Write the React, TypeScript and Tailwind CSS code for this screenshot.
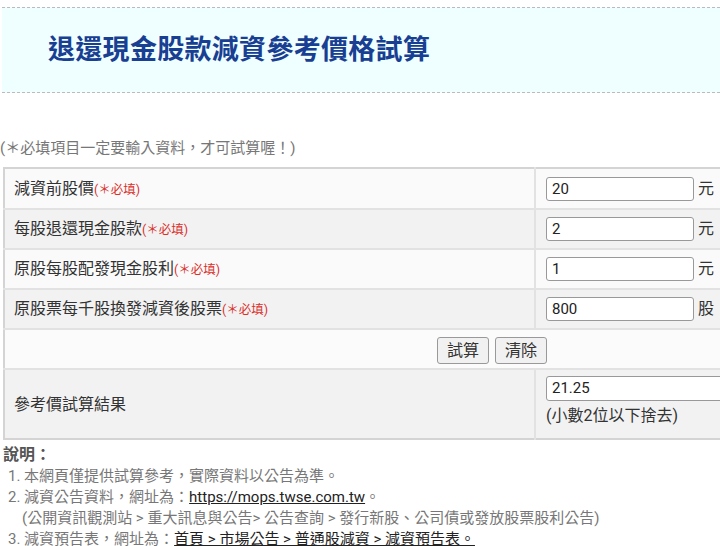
import React from 'react';

const rows = [
  { label: '減資前股價', value: '20', unit: '元', bg: 'bg-[#fafafa]' },
  { label: '每股退還現金股款', value: '2', unit: '元', bg: 'bg-[#f2f2f2]' },
  { label: '原股每股配發現金股利', value: '1', unit: '元', bg: 'bg-[#fafafa]' },
  { label: '原股票每千股換發減資後股票', value: '800', unit: '股', bg: 'bg-[#f2f2f2]' },
];

export default function App() {
  return (
    <div className="w-[720px] h-[546px] overflow-hidden bg-white font-['Roboto','Noto_Sans_CJK_TC',sans-serif] text-[#333]">
      {/* Header */}
      <div className="pt-[7px] pl-[2px]">
        <div className="h-[86px] border-y border-dashed border-[#bbb] bg-[#effeff] flex items-center pl-[46px]">
          <h1 className="text-[27px] font-bold leading-none text-[#183f92] tracking-[0.3px]">
            退還現金股款減資參考價格試算
          </h1>
        </div>
      </div>

      <p className="mt-[45px] text-[15px] leading-[20px] text-[#777]">
        (＊必填項目一定要輸入資料，才可試算喔！)
      </p>

      {/* Form table */}
      <table className="mt-[9px] ml-[3px] w-[978px] border-collapse border-2 border-[#d4d4d4]">
        <tbody>
          {rows.map((r, i) => (
            <tr
              key={r.label}
              className={`${r.bg} ${i === 0 ? 'h-[41px]' : 'h-[40px]'} border-b-2 border-[#e2e2e2]`}
            >
              <td className="w-[531px] pl-[9px] text-[16px] text-[#333] border-r-2 border-[#e2e2e2]">
                {r.label}
                <span className="text-[12.5px] text-[#d9302c]">(＊必填)</span>
              </td>
              <td className="pl-[10px]">
                <div className="flex items-center">
                  <div className="w-[148px] h-[24px] border border-[#999] rounded-[3px] bg-white pl-[5px] text-[15px] leading-[22px] text-[#222]">
                    {r.value}
                  </div>
                  <span className="ml-[4px] text-[16px] text-[#333]">{r.unit}</span>
                </div>
              </td>
            </tr>
          ))}
          <tr className="h-[40px] bg-[#fbfbfb] border-b-2 border-[#e2e2e2]">
            <td colSpan={2} className="pt-[3px]">
              <div className="flex justify-center gap-[6px]">
                <button className="h-[27px] px-[9px] border border-[#999] rounded-[3px] bg-[#f1f1f1] text-[16px] leading-none text-[#333]">
                  試算
                </button>
                <button className="h-[27px] px-[9px] border border-[#999] rounded-[3px] bg-[#f1f1f1] text-[16px] leading-none text-[#333]">
                  清除
                </button>
              </div>
            </td>
          </tr>
          <tr className="h-[70px] bg-[#f2f2f2]">
            <td className="pl-[9px] pt-[2px] text-[16px] text-[#333] border-r-2 border-[#e2e2e2]">
              參考價試算結果
            </td>
            <td className="pl-[10px] align-top pt-[6px]">
              <div className="w-[320px] h-[25px] border border-[#999] rounded-[3px] bg-white pl-[5px] text-[15px] leading-[23px] text-[#222]">
                21.25
              </div>
              <div className="mt-[3px] text-[16px] leading-[24px] text-[#333]">(小數2位以下捨去)</div>
            </td>
          </tr>
        </tbody>
      </table>

      {/* Notes */}
      <div className="mt-[4px] pl-[3px]">
        <div className="text-[16px] leading-[22px] font-semibold text-[#555]">說明：</div>
        <ol className="pl-[5px] text-[15px] leading-[21px] text-[#777]">
          <li>1. 本網頁僅提供試算參考，實際資料以公告為準。</li>
          <li>
            2. 減資公告資料，網址為：
            <a className="underline text-[#222]">https://mops.twse.com.tw</a>。
          </li>
          <li className="pl-[14px]">
            (公開資訊觀測站 &gt; 重大訊息與公告&gt; 公告查詢 &gt; 發行新股、公司債或發放股票股利公告)
          </li>
          <li>
            3. 減資預告表，網址為：
            <a className="underline text-[#222]">首頁 &gt; 市場公告 &gt; 普通股減資 &gt; 減資預告表。</a>
          </li>
        </ol>
      </div>
    </div>
  );
}
